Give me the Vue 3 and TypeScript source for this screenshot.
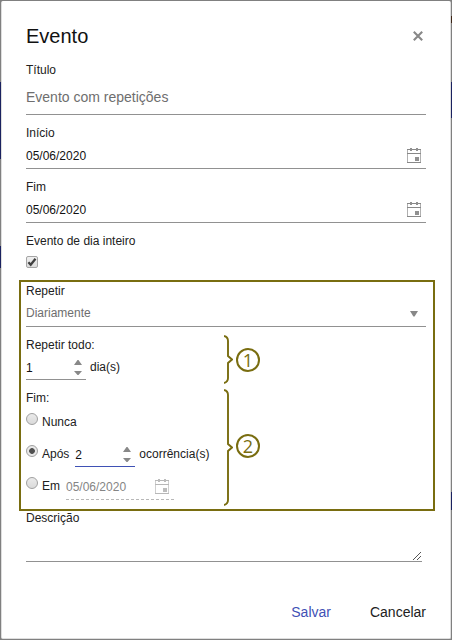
<script setup lang="ts">
import { ref } from 'vue'

const title = ref('Evento com repetições')
const dates = [
  { label: 'Início', value: '05/06/2020' },
  { label: 'Fim', value: '05/06/2020' },
]
const interval = ref(1)
const occurrences = ref(2)
const endMode = ref<'never' | 'after' | 'on'>('after')
const allDay = ref(true)
</script>

<template>
  <div class="backdrop">
    <i class="event left-a"></i><i class="event left-b"></i>
    <i class="event right-a"></i><i class="event right-b"></i><i class="event right-c"></i>
    <main class="dialog">
      <header>
        <h1>Evento</h1>
        <button class="close" aria-label="Fechar">
          <svg width="10" height="10" viewBox="0 0 10 10"><path d="M.8.8 9.2 9.2M9.2.8.8 9.2" fill="none" stroke="#888" stroke-width="2.1" /></svg>
        </button>
      </header>

      <label class="label">Título</label>
      <div class="title-field">{{ title }}</div>

      <section v-for="d in dates" :key="d.label" class="date-group">
        <label class="label">{{ d.label }}</label>
        <div class="date-field">
          <span>{{ d.value }}</span>
          <svg class="calendar" width="14" height="15" viewBox="0 0 14 15">
            <path d="M.5 1v14M13.5 1v14" fill="none" stroke="#b0b0b0" />
            <path d="M0 1.5h14M0 5.5h14M0 14.5h14" fill="none" stroke="#888" />
            <path d="M3 0h2v3H3zM9 0h2v3H9zM8 9h4v4H8z" fill="#909090" />
          </svg>
        </div>
      </section>

      <section class="all-day">
        <label class="label">Evento de dia inteiro</label>
        <button class="checkbox" role="checkbox" :aria-checked="allDay" @click="allDay = !allDay">
          <svg v-if="allDay" width="10" height="10" viewBox="0 0 10 10"><path d="M1.4 5.3 3.7 7.7 8.5 1.8" fill="none" stroke="#404040" stroke-width="2.3" /></svg>
        </button>
      </section>

      <section class="repeat">
        <label class="label">Repetir</label>
        <div class="select">
          <span>Diariamente</span>
          <svg width="8" height="6" viewBox="0 0 8 6"><path d="M0 0h8L4.6 5.5H3.4z" fill="#888" /></svg>
        </div>

        <label class="label">Repetir todo:</label>
        <div class="interval">
          <div class="number">
            <span>{{ interval }}</span>
            <svg width="8" height="16" viewBox="0 0 8 16"><path d="M0 5 3.5 0h1L8 5zM0 11h8l-3.5 4h-1z" fill="#888" /></svg>
          </div>
          <span class="unit">dia(s)</span>
        </div>

        <label class="label">Fim:</label>
        <div class="option never">
          <i class="radio" :class="{ on: endMode === 'never' }"></i><span class="name">Nunca</span>
        </div>
        <div class="option after">
          <i class="radio" :class="{ on: endMode === 'after' }"></i><span class="name">Após</span>
          <div class="number active">
            <span>{{ occurrences }}</span>
            <svg width="8" height="16" viewBox="0 0 8 16"><path d="M0 5 3.5 0h1L8 5zM0 11h8l-3.5 4h-1z" fill="#888" /></svg>
          </div>
          <span class="unit">ocorrência(s)</span>
        </div>
        <div class="option on-date">
          <i class="radio" :class="{ on: endMode === 'on' }"></i><span class="name">Em</span>
          <div class="disabled-date">
            <span>05/06/2020</span>
            <svg class="calendar" width="14" height="15" viewBox="0 0 14 15">
              <path d="M.5 1v14M13.5 1v14" fill="none" stroke="#cfcfcf" />
              <path d="M0 1.5h14M0 5.5h14M0 14.5h14" fill="none" stroke="#b8b8b8" />
              <path d="M3 0h2v3H3zM9 0h2v3H9zM8 9h4v4H8z" fill="#bcbcbc" />
            </svg>
          </div>
        </div>

        <div class="note first">
          <svg width="9" height="49" viewBox="0 0 9 49"><path d="M0 1Q4 2 4 6V21L8 24.5 4 28V43Q4 47 0 48" fill="none" stroke="#796d10" stroke-width="1.9" /></svg>
          <b>1</b>
        </div>
        <div class="note second">
          <svg width="9" height="117" viewBox="0 0 9 117"><path d="M0 1Q4 2 4 6V55L8 58.5 4 62V111Q4 115 0 116" fill="none" stroke="#796d10" stroke-width="1.9" /></svg>
          <b>2</b>
        </div>
      </section>

      <label class="label">Descrição</label>
      <div class="textarea">
        <svg width="8" height="8" viewBox="0 0 8 8"><path d="M0 8 8 0M4 8l4-4" fill="none" stroke="#555" stroke-width="1" /></svg>
      </div>

      <footer>
        <button class="save">Salvar</button>
        <button>Cancelar</button>
      </footer>
    </main>
  </div>
</template>

<style>
body { margin: 0; }
</style>

<style scoped>
* { box-sizing: border-box; }
.backdrop {
  position: relative;
  width: 452px;
  height: 640px;
  padding: 1px;
  background: #808080;
  font: 12px/14px "Liberation Sans", Arial, sans-serif;
  color: #212121;
}
.event { position: absolute; width: 1px; background: #1a2260; }
.left-a { left: 0; top: 82px; height: 77px; }
.left-b { left: 0; top: 246px; height: 22px; }
.right-a { right: 0; top: 16px; height: 7px; background: #3c2415; }
.right-b { right: 0; top: 82px; height: 36px; }
.right-c { right: 0; top: 492px; height: 18px; }
.dialog {
  height: 638px;
  padding: 23px 24px 0;
  border: 1px solid #dedede;
  border-top-color: #fff;
  border-radius: 2px;
  background: #fff;
}
button { border: 0; padding: 0; background: none; font: inherit; color: inherit; }
header { display: flex; justify-content: space-between; height: 38px; }
h1 { margin: 0; font-size: 20px; line-height: 23px; font-weight: 400; color: #111; }
.close { width: 10px; height: 10px; margin: 6px 3px 0 0; }
svg { display: block; }
.label { display: block; height: 14px; }
.title-field {
  height: 38px;
  padding-top: 12px;
  border-bottom: 1px solid #919191;
  font-size: 14px;
  line-height: 16px;
  color: #6e6e6e;
}
.date-group { padding-top: 11px; height: 54px; }
.date-field {
  display: flex;
  justify-content: space-between;
  height: 29px;
  padding: 9px 5px 0 0;
  border-bottom: 1px solid #919191;
  color: #111;
}
.all-day { height: 57px; padding-top: 11px; }
.checkbox {
  display: grid;
  place-items: center;
  width: 12px;
  height: 12px;
  margin-top: 8px;
  border: 1px solid #a5a5a5;
  border-radius: 2px;
  background: linear-gradient(#f0f0f0, #dcdcdc);
}
.date-field .calendar { margin-top: -1px; }
.repeat {
  position: relative;
  width: 416px;
  height: 231px;
  margin-left: -7px;
  padding: 2px 7px 0 5px;
  border: 2px solid #796d10;
}
.select {
  display: flex;
  justify-content: space-between;
  width: 400px;
  height: 29px;
  padding: 8px 8px 0 0;
  margin-bottom: 11px;
  border-bottom: 1px solid #919191;
  color: #6e6e6e;
}
.select svg { margin-top: 5px; }
.interval { display: flex; height: 39px; }
.number {
  display: flex;
  justify-content: space-between;
  width: 60px;
  height: 28px;
  padding: 9px 4px 0 0;
  border-bottom: 1px solid #919191;
  color: #111;
}
.number svg { margin-top: -1px; }
.unit { margin: 8px 0 0 4px; }
.number.active { border-color: #3f51b5; }
.option { display: flex; height: 32px; padding-top: 8px; }
.radio {
  flex: none;
  width: 12px;
  height: 12px;
  margin-right: 4px;
  border: 1px solid #a0a0a0;
  border-radius: 50%;
  background: linear-gradient(#eaeaea, #dadada);
}
.radio.on { background: radial-gradient(circle, #505050 0 2.5px, #e8e8e8 3.2px); }
.name { margin-top: 2px; }
.after .number { margin: -6px 0 0 6px; }
.after .unit { margin-top: 2px; }
.disabled-date {
  display: flex;
  justify-content: space-between;
  width: 108px;
  height: 29px;
  margin: -6px 0 0 6px;
  padding: 9px 5px 0 0;
  border-bottom: 1px dashed #b8b8b8;
  color: #858585;
}
.disabled-date .calendar { margin-top: -1px; }
.note { position: absolute; display: flex; gap: 3px; left: 203px; }
.note b {
  width: 24px;
  height: 24px;
  border: 2px solid #796d10;
  border-radius: 50%;
  color: #796d10;
  font: 400 18px/20px "Open Sans", sans-serif;
  text-align: center;
}
.first { top: 53px; }
.first b { margin-top: 13px; }
.second { top: 107px; }
.second b { margin-top: 45px; }
.textarea {
  display: flex;
  justify-content: flex-end;
  align-items: flex-end;
  width: 396px;
  height: 37px;
  padding: 0 1px 1px 0;
  border-bottom: 1px solid #919191;
}
footer {
  display: flex;
  justify-content: flex-end;
  gap: 39px;
  padding-top: 42px;
  font-size: 14px;
  line-height: 16px;
}
.save { color: #3f51b5; }
</style>
